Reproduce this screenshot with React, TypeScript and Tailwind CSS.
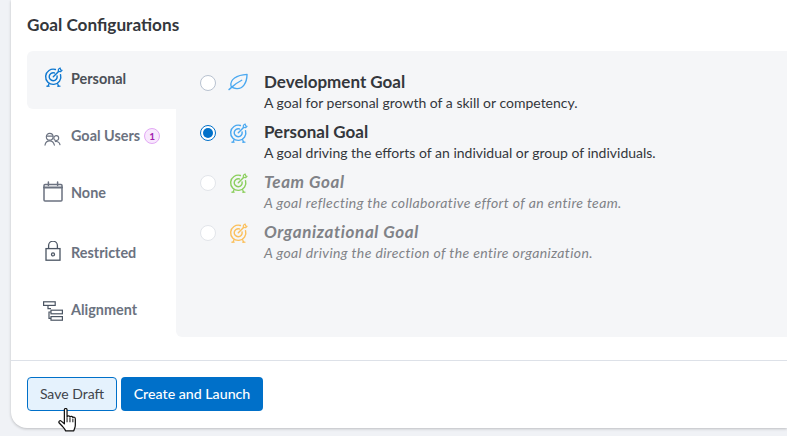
import type { ReactNode } from "react";

const font = "font-['Lato','Noto_Sans',sans-serif]";

function Target({ color, size = 20 }: { color: string; size?: number }) {
  return (
    <svg width={size} height={size + 1} viewBox="0 0 20 21" fill="none" stroke={color} strokeWidth="1.5" strokeLinecap="round" strokeLinejoin="round">
      <path d="M12 2.6A8 8 0 1 0 17.4 8" />
      <path d="M11 6.2A4.2 4.2 0 1 0 13.8 9.4" />
      <path d="M9.8 10.2 15.6 4.4" />
      <path d="M15 4.6 15.2 2.2 17 1 17.4 3 19 3.4 17.4 5Z" strokeWidth="1.2" />
      <path d="M5.4 17.4 4 20.4M14.2 17.4l1.4 3M3 20.2h2.4M14.4 20.2h2.4" strokeWidth="1.3" />
    </svg>
  );
}

function Leaf() {
  return (
    <svg width="21" height="18" viewBox="0 0 21 18" fill="none" stroke="#4aa8f0" strokeWidth="1.4" strokeLinecap="round" strokeLinejoin="round">
      <path d="M3.2 13.4C1.6 6.6 9 1.6 20 1 19.8 10.2 15.6 16.2 9.4 16 6.4 15.9 4.4 15 3.2 13.4Z" />
      <path d="M1 17 5 13.6C8 11 11 9 14.4 7.2" />
    </svg>
  );
}

function Users() {
  return (
    <svg width="17" height="15" viewBox="0 0 18 16" fill="none" stroke="#6b7280" strokeWidth="1.2" strokeLinecap="round">
      <circle cx="6" cy="5" r="3.6" />
      <path d="M2.6 4.4h6.8" />
      <circle cx="13" cy="6.4" r="2.6" />
      <path d="M1 14c.4-3 2.4-4.6 5-4.6s4.4 1.6 5 4.6" />
      <path d="M12 10.2c2.6-.4 4.4 1 5 3.4" />
    </svg>
  );
}

function CalendarIcon() {
  return (
    <svg width="20" height="21" viewBox="0 0 20 21" fill="none" stroke="#6b7280" strokeWidth="1.5" strokeLinecap="round">
      <rect x="1" y="3.4" width="18" height="16.6" rx="1" />
      <path d="M1 6.6h18" strokeWidth="2" />
      <path d="M5.4 1v3.6M14.6 1v3.6" />
    </svg>
  );
}

function Lock() {
  return (
    <svg width="16" height="20" viewBox="0 0 16 20" fill="none" stroke="#4b5563" strokeWidth="1.3">
      <rect x="1" y="7.6" width="14" height="11.6" />
      <path d="M3.6 7.6V4.6a4.4 4.4 0 0 1 8.8 0v3" />
      <circle cx="8" cy="13.4" r="1.5" />
    </svg>
  );
}

function Hierarchy() {
  return (
    <svg width="20" height="21" viewBox="0 0 20 21" fill="none" stroke="#4b5563" strokeWidth="1.2">
      <rect x="0.6" y="0.8" width="11.6" height="3.6" />
      <rect x="8" y="9.2" width="11.4" height="3.6" />
      <rect x="8" y="15.6" width="11.4" height="3.6" />
      <path d="M5 4.4v3.2h3M8 11H6v6.4h2" />
    </svg>
  );
}

function Hand() {
  return (
    <svg width="19" height="24" viewBox="0.5 0.8 17 21.4" className="absolute left-[58px] top-[408px]">
      <path
        d="M6.2 2.4c0-1.6 2.4-1.6 2.4 0v6.2c.4-1.2 2.4-1.2 2.6.2.5-1 2.4-.8 2.6.5.6-.7 2.2-.3 2.2 1v5.6c0 2.6-1 3.4-1.4 5.4H7.4c-.5-1.6-1.6-2.7-3-4.2L1.6 14.2c-1-1.3.6-2.7 1.8-1.7l2.8 2.4Z"
        fill="#fff"
        stroke="#111"
        strokeWidth="1.1"
        strokeLinejoin="round"
      />
      <path d="M8.6 9v4.6M11.2 9.4v4.2M13.8 10.4v3.2" stroke="#111" strokeWidth="0.9" />
    </svg>
  );
}

function Tab({ icon, iconClass = "", label, badge, active, height }: { icon: ReactNode; iconClass?: string; label: string; badge?: string; active?: boolean; height: string }) {
  return (
    <div className={`flex items-center pb-[2px] ${height} ${active ? "rounded-l-md bg-[#f5f6f8]" : ""}`}>
      <div className={`flex w-[44px] shrink-0 justify-center pl-[8px] ${iconClass}`}>{icon}</div>
      <span className={`text-[14.4px] font-bold ${active ? "text-[#4b5057]" : "text-[#6b7280]"}`}>{label}</span>
      {badge && (
        <span className="ml-[4px] flex h-[16px] w-[16px] items-center justify-center rounded-full border border-[#e3a8f5] bg-[#f8e8fd] text-[10px] font-bold text-[#a21caf]">
          {badge}
        </span>
      )}
    </div>
  );
}

function GoalOption({ icon, title, text, selected, disabled }: { icon: ReactNode; title: string; text: string; selected?: boolean; disabled?: boolean }) {
  return (
    <div className="flex h-[50px] items-start">
      <div className={`mt-[3px] flex h-[16px] w-[16px] items-center justify-center rounded-full border bg-white ${selected ? "border-[#0070c9]" : disabled ? "border-[#e2e5ea]" : "border-[#b8c2d0]"}`}>
        {selected && <div className="h-[10px] w-[10px] rounded-full bg-[#0070c9]" />}
      </div>
      <div className="ml-[12px] flex w-[20px] justify-center pt-[1px]">{icon}</div>
      <div className={`ml-[16px] -mt-[1px] ${disabled ? "italic text-[#808287]" : "text-[#34373c]"}`}>
        <div className={`text-[17px] font-bold leading-[22px] ${disabled ? "tracking-[0.6px]" : ""}`}>{title}</div>
        <div className={`whitespace-nowrap text-[14px] leading-[20px] ${disabled ? "tracking-[0.38px]" : ""}`}>{text}</div>
      </div>
    </div>
  );
}

export default function App() {
  return (
    <div className={`relative h-[436px] w-[787px] overflow-hidden bg-[#f0f2f6] ${font}`}>
      <div className="ml-[11px] flex h-[428px] flex-col rounded-bl-2xl bg-white shadow-[0_1px_3px_rgba(0,0,0,0.22)]">
        <h2 className="pl-[16px] pt-[14px] text-[17.2px] font-bold leading-[22px] text-[#34373c]">Goal Configurations</h2>
        <div className="ml-[16px] mt-[15px] flex h-[286px]">
          <div className="flex w-[149px] shrink-0 flex-col">
            <Tab active height="h-[58px]" iconClass="-mt-[4px]" icon={<Target color="#0f78d0" size={19} />} label="Personal" />
            <Tab height="h-[56px]" iconClass="mt-[6px] -translate-x-[1px]" icon={<Users />} label="Goal Users" badge="1" />
            <Tab height="h-[58px]" iconClass="-mt-[4px]" icon={<CalendarIcon />} label="None" />
            <Tab height="h-[62px]" iconClass="-mt-[4px]" icon={<Lock />} label="Restricted" />
            <Tab height="h-[52px]" iconClass="mt-[2px]" icon={<Hierarchy />} label="Alignment" />
          </div>
          <div className="flex-1 rounded-bl-md bg-[#f5f6f8] pl-[24px] pt-[21px]">
            <GoalOption icon={<Leaf />} title="Development Goal" text="A goal for personal growth of a skill or competency." />
            <GoalOption selected icon={<Target color="#4aa8f0" size={19} />} title="Personal Goal" text="A goal driving the efforts of an individual or group of individuals." />
            <GoalOption disabled icon={<Target color="#8ccf5e" size={19} />} title="Team Goal" text="A goal reflecting the collaborative effort of an entire team." />
            <GoalOption disabled icon={<Target color="#fbc05c" size={19} />} title="Organizational Goal" text="A goal driving the direction of the entire organization." />
          </div>
        </div>
        <div className="mt-[23px] flex gap-[4px] border-t border-[#dde1e8] pl-[16px] pt-[16px]">
          <button className="h-[34px] w-[90px] rounded border border-[#0070c9] bg-[#e5f2fd] pb-[1px] text-[14px] text-[#3f444b]">Save Draft</button>
          <button className="h-[34px] w-[142px] rounded bg-[#0070c9] pb-[1px] text-[14.2px] font-medium text-white">Create and Launch</button>
        </div>
      </div>
      <Hand />
    </div>
  );
}
